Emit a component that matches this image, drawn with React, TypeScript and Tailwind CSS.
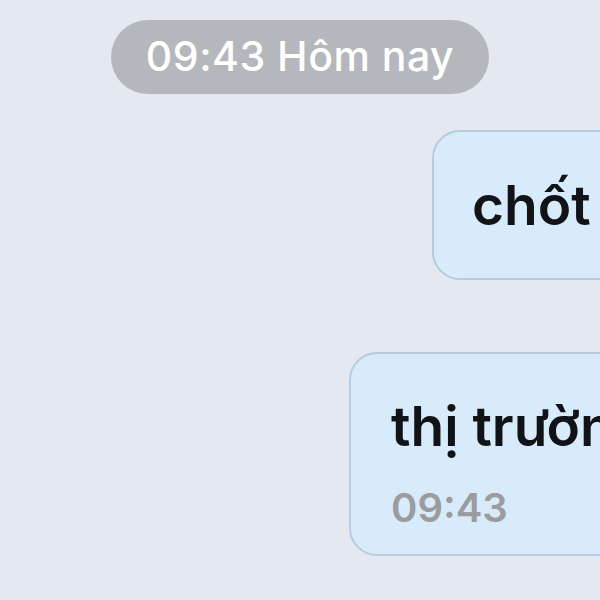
export default function App() {
  return (
    <div
      className="w-[600px] h-[600px] overflow-hidden bg-[#e3e8f1] flex flex-col"
      style={{ fontFamily: '"Inter", "Noto Sans", sans-serif' }}
    >
      <div className="mt-[20px] flex justify-center">
        <div className="h-[74px] w-[378px] rounded-full bg-[#b4b7bc] flex items-center justify-center text-white text-[41px] font-medium tracking-[0.5px]">
          09:43 Hôm nay
        </div>
      </div>

      <div className="mt-[36px] ml-[432px] w-[400px] h-[150px] shrink-0 rounded-[28px] border-2 border-[#b8cbdc] bg-[#d7ebfa] flex items-center pl-[38px] whitespace-nowrap text-[#111317] text-[55px] font-semibold">
        chốt lời
      </div>

      <div className="mt-[72px] ml-[349px] w-[400px] h-[204px] shrink-0 rounded-[28px] border-2 border-[#b8cbdc] bg-[#d7ebfa] flex flex-col pl-[40px] pt-[36px] whitespace-nowrap">
        <div className="text-[#111317] text-[55px] font-semibold leading-[72px]">thị trường</div>
        <div className="mt-[22px] text-[#9a9c9f] text-[40px] font-semibold leading-[48px]">09:43</div>
      </div>
    </div>
  );
}
